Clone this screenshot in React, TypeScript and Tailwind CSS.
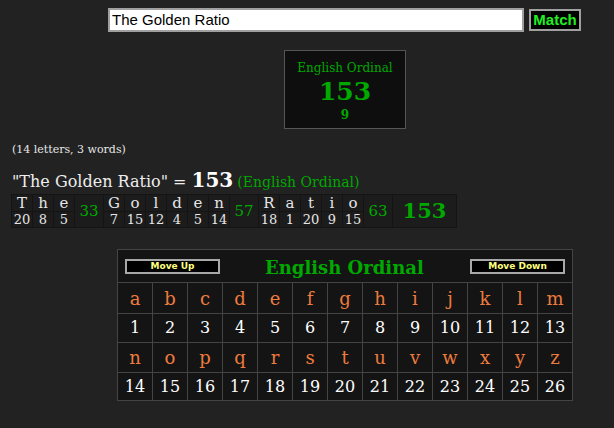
import React from "react";

const SERIF = "font-['DejaVu_Serif',serif]";

const WORDS: { letters: string; sum: number }[] = [
  { letters: "The", sum: 33 },
  { letters: "Golden", sum: 57 },
  { letters: "Ratio", sum: 63 },
];

const ordinal = (ch: string) => ch.toLowerCase().charCodeAt(0) - 96;

const ALPHA = "abcdefghijklmnopqrstuvwxyz".split("");

function Breakdown() {
  return (
    <div className={`inline-flex gap-px bg-[#141414] p-px ${SERIF}`}>
      {WORDS.map((w) => (
        <React.Fragment key={w.letters}>
          {w.letters.split("").map((ch, i) => (
            <div key={i} className="flex flex-col gap-px">
              <div className="h-4 w-5 bg-[#1c1c1c] text-[15px] leading-4 text-center text-[#e6e6e6]">
                {ch}
              </div>
              <div className="h-[15px] w-5 bg-[#1c1c1c] text-[13px] leading-[15px] text-center text-[#e6e6e6]">
                {ordinal(ch)}
              </div>
            </div>
          ))}
          <div className="w-7 bg-[#1c1c1c] flex items-center justify-center text-[15px] text-[#00a800]">
            {w.sum}
          </div>
        </React.Fragment>
      ))}
      <div className="w-[63px] bg-[#1c1c1c] flex items-center justify-center text-[21px] font-bold text-[#00a800]">
        153
      </div>
    </div>
  );
}

function MoveButton({ label }: { label: string }) {
  return (
    <button className="h-[15px] w-[95px] bg-black border-2 border-[#a8a8a8] text-[9px] leading-[11px] font-bold text-[#ffff80] font-['DejaVu_Sans',sans-serif]">
      {label}
    </button>
  );
}

function CipherTable() {
  const rows = [ALPHA.slice(0, 13), ALPHA.slice(13)];
  const heights = [["h-[30px]", "h-[28px]"], ["h-[29px]", "h-[27px]"]];
  return (
    <div className={`w-[456px] border border-[#444] bg-[#444] ${SERIF}`}>
      <div className="h-[32px] bg-[#141414] flex items-center justify-between px-[7px] relative">
        <MoveButton label="Move Up" />
        <span className="text-[18px] font-bold text-[#00a800] absolute left-[147px] top-[4px]">
          English Ordinal
        </span>
        <MoveButton label="Move Down" />
      </div>
      {rows.map((letters, r) => (
        <div key={r} className="grid grid-cols-[repeat(13,34px)] gap-px mt-px">
          {letters.map((ch) => (
            <div
              key={ch}
              className={`${heights[r][0]} bg-[#141414] flex items-center justify-center text-[18px] text-[#ee7b3e]`}
            >
              {ch}
            </div>
          ))}
          {letters.map((ch) => (
            <div
              key={ch + "n"}
              className={`${heights[r][1]} bg-[#141414] flex items-center justify-center text-[16px] text-white`}
            >
              {ordinal(ch)}
            </div>
          ))}
        </div>
      ))}
    </div>
  );
}

export default function App() {
  return (
    <div className={`w-[614px] h-[428px] bg-[#222222] overflow-hidden ${SERIF}`}>
      <div className="flex items-center gap-[5px] pl-[108px] pt-[8px]">
        <div className="w-[416px] h-6 bg-white border-2 border-[#a0a0a0] px-[2px] text-[15px] leading-5 text-black font-['Liberation_Sans',sans-serif]">
          The Golden Ratio
        </div>
        <button className="h-[22px] w-[52px] bg-black border-2 border-[#a0a0a0] text-[15px] leading-[18px] font-bold text-[#22ee22] font-['Liberation_Sans',sans-serif]">
          Match
        </button>
      </div>

      <div className="ml-[284px] mt-[18px] w-[122px] h-[79px] border border-[#555] bg-[#0e0e0e] flex flex-col items-center text-[#00a800]">
        <div className="mt-[10px] text-[12px] leading-[14px]">English Ordinal</div>
        <div className="mt-[3px] text-[25px] leading-7 font-bold">153</div>
        <div className="mt-[2px] text-[12px] leading-[14px] font-bold">9</div>
      </div>

      <div className="ml-[12px] mt-[14px] text-[11px] leading-[14px] text-[#e6e6e6]">
        (14 letters, 3 words)
      </div>

      <div className="ml-[12px] mt-[12px] h-[22px] flex items-baseline text-[#eeeeee] leading-[22px]">
        <span className="text-[16px]">"The Golden Ratio" =</span>
        <span className="ml-[5px] text-[20px] font-bold text-white">153</span>
        <span className="ml-[4px] text-[14px] text-[#00a800]">(English Ordinal)</span>
      </div>

      <div className="ml-[11px] mt-[3px] flex">
        <Breakdown />
      </div>

      <div className="ml-[117px] mt-[21px]">
        <CipherTable />
      </div>
    </div>
  );
}
